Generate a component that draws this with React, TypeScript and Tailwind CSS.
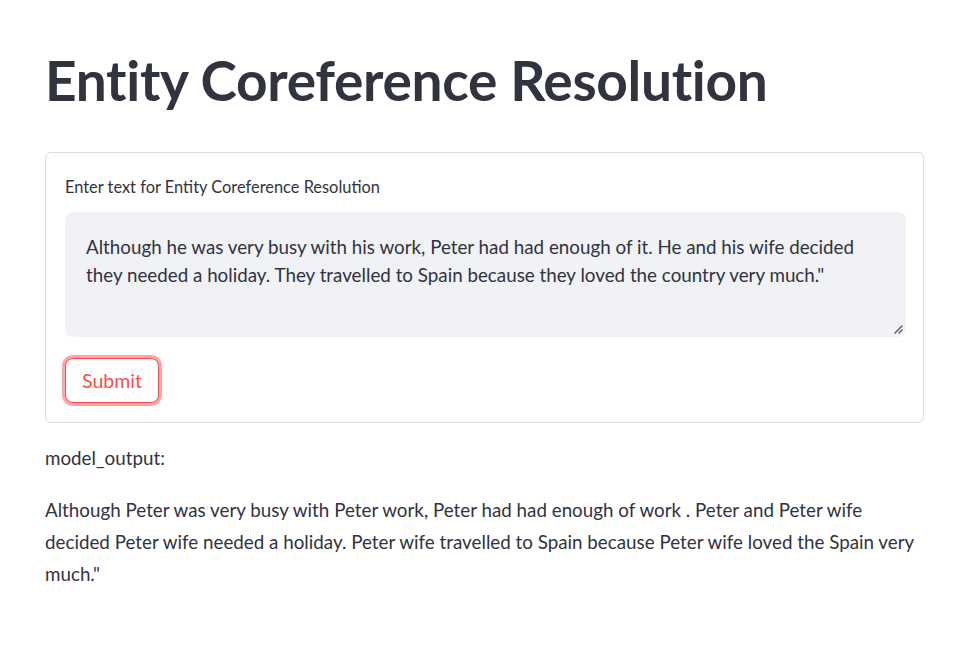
import React from 'react';

const INPUT =
  'Although he was very busy with his work, Peter had had enough of it. He and his wife decided they needed a holiday. They travelled to Spain because they loved the country very much."';

const OUTPUT =
  'Although Peter was very busy with Peter work, Peter had had enough of work . Peter and Peter wife decided Peter wife needed a holiday. Peter wife travelled to Spain because Peter wife loved the Spain very much."';

export default function App() {
  return (
    <div
      className="min-h-[660px] w-full bg-white text-[#31333f]"
      style={{ fontFamily: 'Lato, "Noto Sans", sans-serif' }}
    >
      <div className="w-[879px] ml-[45px] pt-[44px]">
        <h1 className="text-[55px] font-bold leading-[72px] tracking-[-0.3px] text-[#31333f]">
          Entity Coreference Resolution
        </h1>

        {/* Form */}
        <div className="mt-[36px] border border-[#dcdce0] rounded-[6px] pl-[19px] pr-[17px] pt-[24px] pb-[19px]">
          <label className="block text-[16.4px] leading-[20px] mb-[15px]">
            Enter text for Entity Coreference Resolution
          </label>
          <div className="relative">
            <textarea
              defaultValue={INPUT}
              className="block w-full h-[125px] resize-none bg-[#f0f2f6] rounded-[8px] px-[21px] pt-[21px] text-[18.8px] leading-[28px] text-[#31333f] outline-none"
              style={{ fontFamily: 'Lato, "Noto Sans", sans-serif' }}
            />
            <svg
              className="absolute right-[3px] bottom-[3px]"
              width="10"
              height="10"
              viewBox="0 0 10 10"
            >
              <path d="M9 2 L2 9 M9 6 L6 9" stroke="#555" strokeWidth="1.4" strokeLinecap="round" />
            </svg>
          </div>
          <button className="mt-[21px] h-[45px] px-[16px] rounded-[8px] border border-[#ff4b4b] text-[#ff4b4b] text-[19.5px] bg-white shadow-[0_0_0_3px_rgba(255,75,75,0.5)]">
            Submit
          </button>
        </div>

        <p className="mt-[19px] text-[18.8px] leading-[32px]">model_output:</p>
        <p className="mt-[20px] text-[18.8px] leading-[32px]">{OUTPUT}</p>
      </div>
    </div>
  );
}
